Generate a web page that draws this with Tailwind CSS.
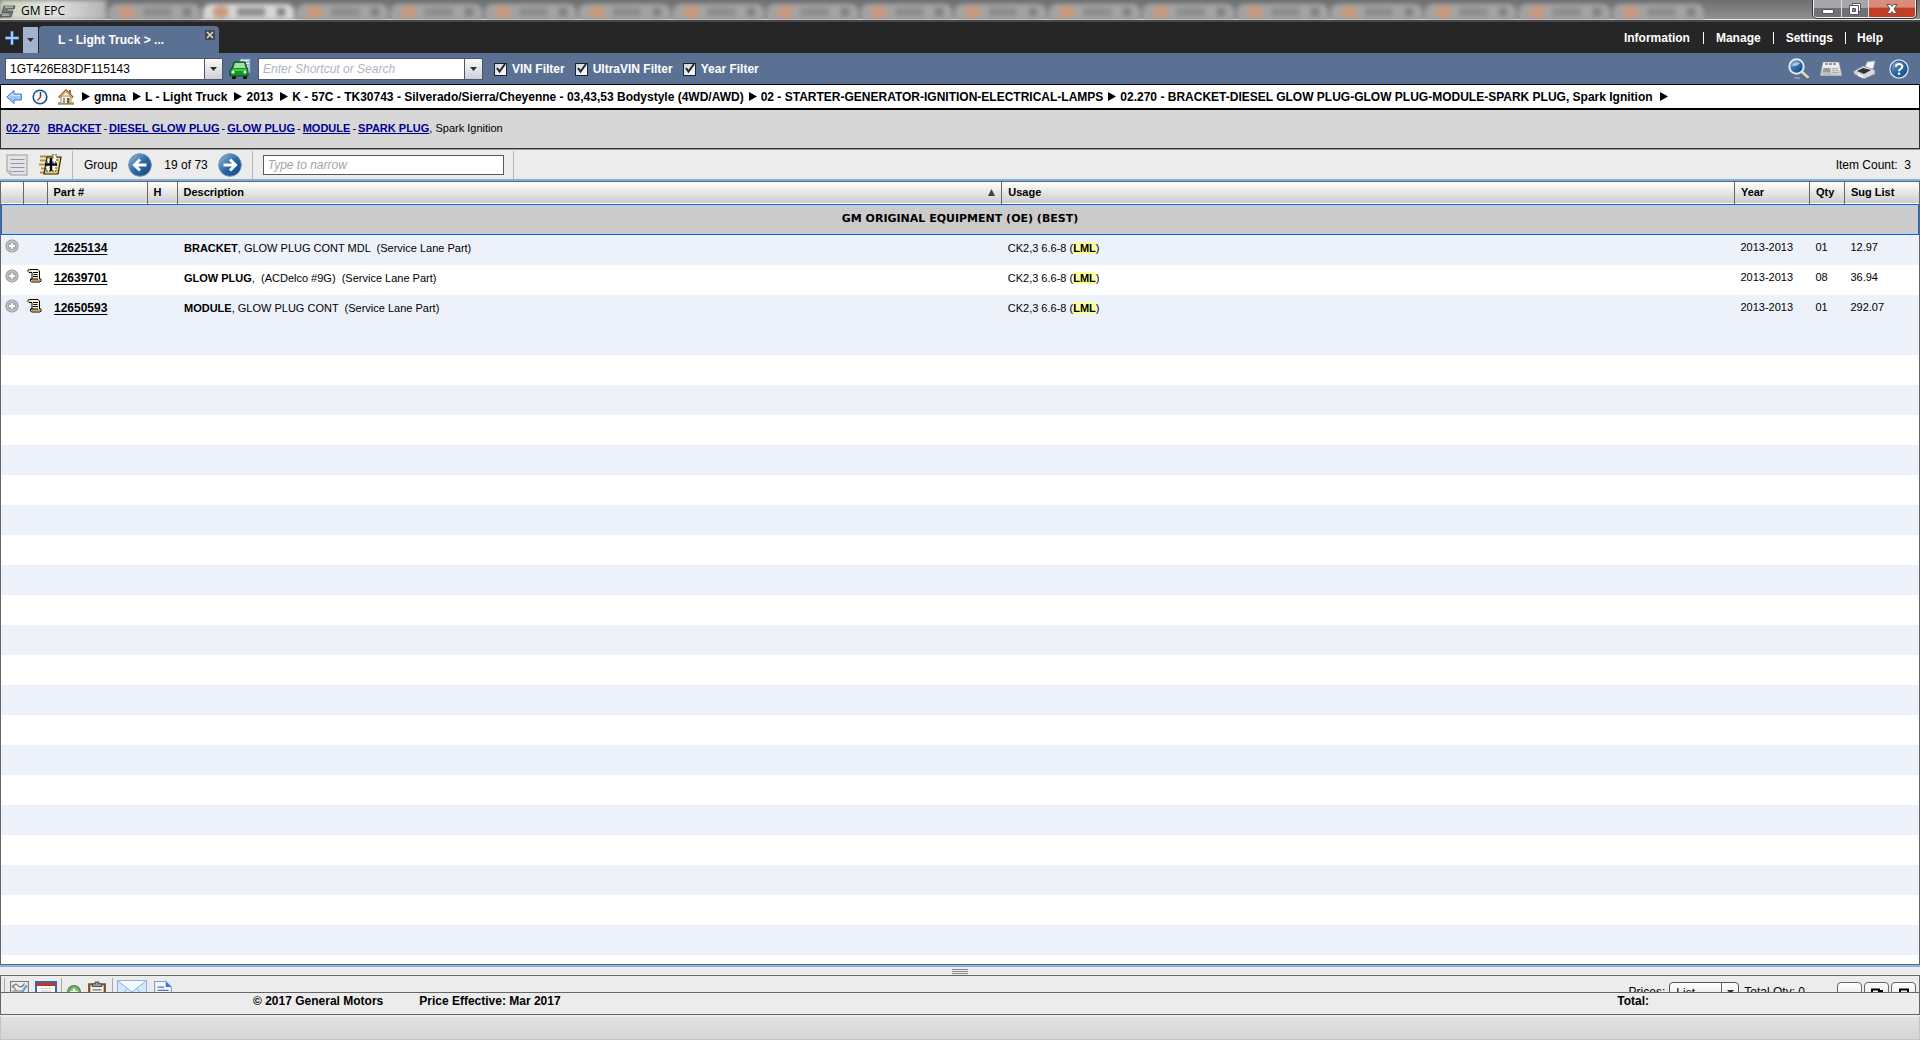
<!DOCTYPE html>
<html lang="en">
<head>
<meta charset="utf-8">
<title>GM EPC</title>
<script src="https://cdn.jsdelivr.net/npm/@tailwindcss/browser@4"></script>
</head>
<body class="flex h-screen flex-col overflow-hidden bg-[#ececec] font-['Liberation_Sans',Arial,sans-serif] text-xs text-black">

<svg class="absolute h-0 w-0" aria-hidden="true">
  <defs>
    <linearGradient id="glass" x1="0" y1="0" x2="1" y2="1"><stop offset="0" stop-color="#9cc0de"/><stop offset=".5" stop-color="#2e69a4"/><stop offset="1" stop-color="#10447f"/></linearGradient>
    <linearGradient id="steel" x1="0" y1="0" x2="0" y2="1"><stop offset="0" stop-color="#ffffff"/><stop offset="1" stop-color="#c4c7cc"/></linearGradient>
    <symbol id="crumb" viewBox="0 0 9 11"><path d="M1 1 9 5.500 1 10z" fill="#000"/></symbol>
    <symbol id="plus-disc" viewBox="0 0 15 15"><circle cx="7.500" cy="7.500" r="7" fill="#8f8f8f"/><circle cx="7.500" cy="7.500" r="5.500" fill="#adadad" stroke="#d6d6d6"/><path d="M7.500 4.500v6M4.500 7.500h6" stroke="#fff" stroke-width="2"/></symbol>
    <symbol id="scroll" viewBox="0 0 15 15"><path d="M2.500 1.500H11l1.500 1.500v8H14v2l-1 1H4.500l-1-1v-2H5V4.500H2L1 3.500V2z" fill="#fff3dc" stroke="#000"/><path d="M5 11.500h8.500v1.500H4.500z" fill="#d39a3c"/><path d="M1.500 2.500h3v1.500h-3z" fill="#e8cf9a"/><path d="M6 4.500h5M6.500 6.500h4M6 8.500h5M4 11h7" stroke="#000"/></symbol>
    <symbol id="chevron" viewBox="0 0 7 4"><path d="M0 0h7L3.500 4z" fill="#2c2f36"/></symbol>
  </defs>
</svg>

<!-- Window title bar -->
<div class="relative flex h-[22px] shrink-0 overflow-hidden border-b-2 border-[#45454a] bg-linear-to-b from-[#6d6f71] to-[#919191] shadow-[inset_0_-1px_0_#e8e8e8]">
  <div id="ghost-tabs" class="flex min-w-0 flex-1 blur-[2px]" aria-hidden="true">
    <span class="w-[106px] shrink-0 bg-linear-to-r from-[#cbd5b9] via-[#e4e4e4] to-[#b2b2b2]"></span>
  </div>
  <div class="absolute top-0 left-0 flex items-center gap-[5px] pt-px">
    <svg class="h-5 w-4" viewBox="0 0 16 20"><path d="M4 5h11l-1 3H7l-.500 2H13l-2 6H0l1-3h8l.500-1.500H2z" fill="#77777a" stroke="#48484a" stroke-width=".8"/><path d="M5 6h8M2 14h7" stroke="#ddd"/></svg>
    <span class="font-['Open_Sans',sans-serif] text-xs">GM EPC</span>
  </div>
  <div class="absolute top-0 right-1 flex h-[18px] overflow-hidden rounded-b border border-t-0 border-[#f0f0f0] outline outline-[#333]">
    <button aria-label="Minimize" class="flex w-7 items-center justify-center border-r border-[#ddd] bg-linear-to-b from-[#a6a6a8] from-50% to-[#707075] to-50%"><svg class="h-4 w-4" viewBox="0 0 16 16"><path d="M2.500 8.500h11v4h-11z" fill="#fff" stroke="#55555f"/></svg></button>
    <button aria-label="Restore" class="flex w-[27px] items-center justify-center border-r border-[#ddd] bg-linear-to-b from-[#a6a6a8] from-50% to-[#707075] to-50%"><svg class="h-4 w-4" viewBox="0 0 16 16"><path d="M5.500 2.500h8v8h-8z" fill="#fff" stroke="#55555f"/><path d="M2.500 4.500h9v9h-9z" fill="#fff" stroke="#55555f"/><path d="M5.500 7.500h3v3h-3z" fill="#88888c" stroke="#55555f"/></svg></button>
    <button aria-label="Close" class="flex w-[46px] items-center justify-center bg-linear-to-b from-[#d98c7c] from-40% to-[#c23f25] to-50%"><svg class="h-4 w-4" viewBox="0 0 16 16"><path d="M3 3.500h3.500L8 5.500l1.500-2H13L10 8l3 4.500H9.500L8 10.500l-1.500 2H3L6 8z" fill="#fff" stroke="#54545e"/></svg></button>
  </div>
</div>

<!-- Tabs and main menu -->
<div class="flex h-[31px] shrink-0 bg-[#262626]">
  <button aria-label="New tab" class="flex w-[23px] items-center justify-center"><svg class="h-3.5 w-3.5" viewBox="0 0 14 14"><path d="M7 0v14M0 7h14" stroke="#2f5c96" stroke-width="4"/><path d="M7 .5v13M.5 7h13" stroke="#a9cdf3" stroke-width="2"/></svg></button>
  <button aria-label="Tab list" class="mt-[5px] flex w-[15px] items-center justify-center bg-[#a5b2cb]"><svg class="h-1 w-[7px]"><use href="#chevron"/></svg></button>
  <div class="mt-1 ml-px flex w-[180px] justify-between rounded-t bg-[#5b7193] pr-1 pl-[19px]">
    <a href="#" class="pt-[6px] font-bold text-white">L - Light Truck &gt; ...</a>
    <button aria-label="Close tab" class="mt-1 flex h-[10px] w-[10px] items-center justify-center bg-[#484848]"><svg class="h-2 w-2" viewBox="0 0 8 8"><path d="m1 1 6 6M7 1 1 7" stroke="#ddd" stroke-width="1.500"/></svg></button>
  </div>
  <nav class="ml-auto flex items-center pr-[37px] font-bold text-white">
    <a href="#" class="border-r border-white pr-[13px] leading-3">Information</a>
    <a href="#" class="border-r border-white px-[12px] leading-3">Manage</a>
    <a href="#" class="border-r border-white px-[12px] leading-3">Settings</a>
    <a href="#" class="pl-[11px] leading-3">Help</a>
  </nav>
</div>

<!-- Search and filters -->
<div class="flex h-[31px] shrink-0 items-center bg-[#5b7193] px-[5px] pt-px">
  <div class="flex h-[22px] w-[218px] border border-[#4c5666]">
    <input aria-label="VIN" value="1GT426E83DF115143" class="min-w-0 flex-1 bg-white px-1 text-xs outline-none">
    <button aria-label="VIN history" class="flex w-[18px] items-center justify-center border-l border-[#4c5666] bg-linear-to-b from-[#fafafa] to-[#cdd0d6]"><svg class="h-1 w-[7px]"><use href="#chevron"/></svg></button>
  </div>
  <button aria-label="Vehicle information" class="ml-1.5"><svg class="h-[22px] w-[23px]" viewBox="0 0 23 22">
    <path d="M11 1h10v14H11z" fill="#e5ebf7" stroke="#7187b8"/><path d="M12 4h8M12 7h8M16 10h4" stroke="#6b80b2"/>
    <path d="M3 16h4v5H3zM14 16h4v5h-4z" fill="#151515"/>
    <path d="M5 4h11l2 6 1 2v6H1v-6l2-2z" fill="#159528" stroke="#0b4f13"/><path d="M6 5h9l1.500 5h-12z" fill="#9fe3a2"/><path d="M4 11h13v2H4z" fill="#4cc454"/><circle cx="4" cy="14" r="1.600" fill="#fff"/><circle cx="16" cy="14" r="1.600" fill="#fff"/></svg></button>
  <div class="ml-[6px] flex h-[22px] w-[225px] border border-[#4c5666]">
    <input aria-label="Shortcut or search" placeholder="Enter Shortcut or Search" class="min-w-0 flex-1 bg-white px-1 text-xs italic outline-none placeholder:text-[#b0b3b8]">
    <button aria-label="Search history" class="flex w-[18px] items-center justify-center border-l border-[#4c5666] bg-linear-to-b from-[#fafafa] to-[#cdd0d6]"><svg class="h-1 w-[7px]"><use href="#chevron"/></svg></button>
  </div>
  <div class="ml-[11px] flex gap-2.5 text-xs font-bold text-white">
    <label class="flex items-center gap-[5px]"><span class="relative flex"><input type="checkbox" checked class="h-[13px] w-[13px] appearance-none border border-[#1c2330] bg-linear-to-br from-[#cfd3da] to-white"><svg class="pointer-events-none absolute -top-px left-0.5 h-3 w-2.5" viewBox="0 0 10 12"><path d="m1 6 2.500 3.500L9 2" fill="none" stroke="#20232a" stroke-width="2"/></svg></span>VIN Filter</label>
    <label class="flex items-center gap-[5px]"><span class="relative flex"><input type="checkbox" checked class="h-[13px] w-[13px] appearance-none border border-[#1c2330] bg-linear-to-br from-[#cfd3da] to-white"><svg class="pointer-events-none absolute -top-px left-0.5 h-3 w-2.5" viewBox="0 0 10 12"><path d="m1 6 2.500 3.500L9 2" fill="none" stroke="#20232a" stroke-width="2"/></svg></span>UltraVIN Filter</label>
    <label class="flex items-center gap-[5px]"><span class="relative flex"><input type="checkbox" checked class="h-[13px] w-[13px] appearance-none border border-[#1c2330] bg-linear-to-br from-[#cfd3da] to-white"><svg class="pointer-events-none absolute -top-px left-0.5 h-3 w-2.5" viewBox="0 0 10 12"><path d="m1 6 2.500 3.500L9 2" fill="none" stroke="#20232a" stroke-width="2"/></svg></span>Year Filter</label>
  </div>
  <div class="ml-auto flex items-center gap-[11px] pr-1.5">
    <button aria-label="Find"><svg class="h-[22px] w-[22px]" viewBox="0 0 22 22"><path d="m14 13 7 6.500" stroke="#5b5f66" stroke-width="4.500" stroke-linecap="round"/><path d="m14 13 6.500 6" stroke="#d7d7d7" stroke-width="3" stroke-linecap="round"/><circle cx="9.500" cy="8.500" r="7.200" fill="url(#glass)" stroke="#e3e6ea" stroke-width="2"/><path d="M5 8a5 4 0 0 1 8-3c-2 3-5 3-8 3" fill="#c5d9ee" opacity=".8"/><path d="M7 20h6" stroke="#a9b8d2"/></svg></button>
    <button aria-label="News"><svg class="h-4 w-[22px]" viewBox="0 0 22 16"><path d="M3 1h16l3 13v1H0v-1z" fill="url(#steel)" stroke="#777b80" stroke-width=".6"/><path d="M5 3h12" stroke="#777" stroke-width="1.500" stroke-dasharray="3 1"/><path d="M3.500 7h7l-.3 4.500H2.500z" fill="#9a9a9a"/><path d="M12 7.500h6M12 9.500h6.500M12 11.500h7M3 13h8" stroke="#a5a5a5" stroke-width=".8"/></svg></button>
    <button aria-label="Print"><svg class="h-[19px] w-[23px]" viewBox="0 0 23 19"><path d="m14 2 8-1-2 8-9 1z" fill="#f3f7fa" stroke="#a8b0b8" stroke-width=".7"/><path d="M1 11 10 6l12 4v4L11 19 1 14z" fill="#d6d8da" stroke="#83868a" stroke-width=".7"/><path d="m4 11 6-3 8 2-7 4z" fill="#303338"/><path d="m5 14 5 2v2l-5-2z" fill="#fff"/></svg></button>
    <button aria-label="Help" class="ml-0.5"><svg class="h-5 w-5" viewBox="0 0 20 20"><circle cx="10" cy="10" r="9" fill="url(#glass)" stroke="#dfe7f0" stroke-width="1.500"/><circle cx="10" cy="10" r="8" fill="none" stroke="#2a5c96"/><path d="M7 7.800C7 4 13.500 4.200 13.300 7.800 13.200 10 10 9.700 10 12.200" fill="none" stroke="#fff" stroke-width="2.200"/><path d="M8.900 13.600h2.300v2.200H8.900z" fill="#fff"/></svg></button>
  </div>
</div>

<!-- Breadcrumb -->
<div class="flex h-[26px] shrink-0 items-center border border-b-2 border-black bg-white px-[5px] font-bold whitespace-nowrap">
  <button aria-label="Back"><svg class="h-4 w-4" viewBox="0 0 16 16"><path d="M.8 8 8 1.500V5h7.300v6H8v3.500z" fill="#9cc6f8" stroke="#4577d4"/><path d="M3 8 7 4.500V6.500h7" fill="none" stroke="#dcebff"/></svg></button>
  <button aria-label="History" class="ml-2.5"><svg class="h-4 w-4" viewBox="0 0 16 16"><circle cx="8" cy="8" r="6.800" fill="#fff" stroke="#1d5283" stroke-width="1.600"/><circle cx="8" cy="8" r="5" fill="none" stroke="#9cc" stroke-dasharray="1 3"/><path d="M8.500 3v5l-3 3.500" fill="none" stroke="#c03030" stroke-width="1.300"/><path d="M8.500 3v5" stroke="#224d86" stroke-width="1.300"/></svg></button>
  <button aria-label="Home" class="ml-2.5"><svg class="h-4 w-4" viewBox="0 0 16 16"><path d="M0 14.500h16" stroke="#7ca64a" stroke-width="2.500"/><path d="M3 7h10v7.500H3z" fill="#f7efe0" stroke="#a78a68"/><path d="M11 1h2v4h-2z" fill="#b45d3c"/><path d="m1 8.500 7-7 7 7" fill="none" stroke="#9a622f" stroke-width="2.200"/><path d="m2 8 6-6 6 6" fill="none" stroke="#e3b56d"/><path d="M5 9h2v5H5z" fill="#7f9ab8"/><path d="M9 9h2.500v5.500H9z" fill="#8a5a35"/></svg></button>
  <nav class="flex items-center gap-1 pl-[7px]" aria-label="Breadcrumb">
    <svg class="h-[11px] w-[9px]"><use href="#crumb"/></svg><a href="#">gmna</a>
    <svg class="ml-0.5 h-[11px] w-[9px]"><use href="#crumb"/></svg><a href="#">L - Light Truck</a>
    <svg class="ml-0.5 h-[11px] w-[9px]"><use href="#crumb"/></svg><a href="#">2013</a>
    <svg class="ml-0.5 h-[11px] w-[9px]"><use href="#crumb"/></svg><a href="#">K - 57C - TK30743 - Silverado/Sierra/Cheyenne - 03,43,53 Bodystyle (4WD/AWD)</a>
    <svg class="h-[11px] w-[9px]"><use href="#crumb"/></svg><a href="#">02 - STARTER-GENERATOR-IGNITION-ELECTRICAL-LAMPS</a>
    <svg class="h-[11px] w-[9px]"><use href="#crumb"/></svg><a href="#">02.270 - BRACKET-DIESEL GLOW PLUG-GLOW PLUG-MODULE-SPARK PLUG, Spark Ignition</a>
    <svg class="ml-0.5 h-[11px] w-[9px]"><use href="#crumb"/></svg>
  </nav>
</div>

<!-- Group caption -->
<div class="flex h-[39px] shrink-0 items-center gap-0.5 border-x border-b border-[#333] bg-[#d7d7d7] px-[5px] pb-0.5 text-[11px]">
  <a href="#" class="mr-1.5 font-bold text-[#00008f] underline">02.270</a>
  <a href="#" class="font-bold text-[#00008f] underline">BRACKET</a><span>-</span>
  <a href="#" class="font-bold text-[#00008f] underline">DIESEL GLOW PLUG</a><span>-</span>
  <a href="#" class="font-bold text-[#00008f] underline">GLOW PLUG</a><span>-</span>
  <a href="#" class="font-bold text-[#00008f] underline">MODULE</a><span>-</span>
  <span><a href="#" class="font-bold text-[#00008f] underline">SPARK PLUG</a>, Spark Ignition</span>
</div>

<!-- Group toolbar -->
<div class="flex h-8 shrink-0 items-center border-t border-b-2 border-t-[#999] border-b-[#7fb0e0] bg-[#ececec] px-1.5">
  <button aria-label="List view"><svg class="h-[22px] w-[22px]" viewBox="0 0 22 22"><path d="M1 1h20v20H5l-4-4z" fill="#e4e4e4" stroke="#b5b5b5" stroke-width="1.500"/><path d="M4.500 5.500h14M4.500 9.500h14M4.500 13.500h14M6.500 17.500h12" stroke="#8b97b5"/><path d="M1 17h4v4" fill="#ccc" stroke="#aaa"/></svg></button>
  <button aria-label="Add callouts" class="ml-[11px]"><svg class="h-[22px] w-[23px]" viewBox="0 0 23 22"><path d="M1 2.500h14M1 6.500h9M0 10.500h9M2 14.500h7M1 18.500h6" stroke="#b8922c" stroke-width="2"/><path d="m8 3 14 0-3 17H5z" fill="#f4d548" stroke="#222" stroke-width="1.200"/><path d="M9 5h10l-2 12H7z" fill="#fff"/><path d="M13 1h5v7M7 8h10v9H7z" fill="#fff" stroke="#222a66" stroke-dasharray="2 1"/><path d="M12 4v13M6 10.500h12" stroke="#000" stroke-width="2.500"/></svg></button>
  <span class="ml-[10px] h-7 w-px bg-[#b8b8b8]"></span>
  <span class="ml-[11px]">Group</span>
  <button aria-label="Previous group" class="ml-[11px]"><svg class="h-6 w-6" viewBox="0 0 24 24"><circle cx="12" cy="12" r="11.300" fill="url(#glass)" stroke="#6b8fb2"/><path d="M18.500 12H7M12 6.500 6.500 12l5.500 5.500" fill="none" stroke="#fff" stroke-width="3"/></svg></button>
  <span class="ml-3">19 of 73</span>
  <button aria-label="Next group" class="ml-[10px]"><svg class="h-6 w-6" viewBox="0 0 24 24"><circle cx="12" cy="12" r="11.300" fill="url(#glass)" stroke="#6b8fb2"/><path d="M5.500 12H17M12 6.500 17.500 12 12 17.500" fill="none" stroke="#fff" stroke-width="3"/></svg></button>
  <span class="ml-2.5 h-7 w-px bg-[#b8b8b8]"></span>
  <input aria-label="Type to narrow" placeholder="Type to narrow" class="ml-2.5 h-5 w-[241px] border border-[#5a5a5a] bg-white px-1 text-xs italic outline-none placeholder:text-[#a4a4a4]">
  <span class="ml-[9px] h-7 w-px bg-[#b8b8b8]"></span>
  <span class="mr-[3px] ml-auto whitespace-pre">Item Count:  3</span>
</div>

<!-- Parts list -->
<main class="flex min-h-0 flex-1 flex-col overflow-hidden border border-[#666] bg-white">
  <table class="w-full table-fixed border-collapse text-left text-[11px]">
    <colgroup><col class="w-[22px]"><col class="w-6"><col class="w-[100px]"><col class="w-[30px]"><col class="w-[43%]"><col class="w-[38.2%]"><col class="w-[75px]"><col class="w-[35px]"><col></colgroup>
    <thead>
      <tr class="h-[22px] border-b border-[#666] bg-linear-to-b from-white to-[#cdcdcd]">
        <th class="border-r border-[#666]"></th><th class="border-r border-[#666]"></th>
        <th class="border-r border-[#666] pl-1.5">Part #</th>
        <th class="border-r border-[#666] pl-1.5">H</th>
        <th class="border-r border-[#666] px-1.5"><div class="flex items-center justify-between">Description<svg class="h-[7px] w-[7px]" viewBox="0 0 7 7"><path d="M3.500 0 7 7H0z" fill="#444"/></svg></div></th>
        <th class="border-r border-[#666] pl-1.5">Usage</th>
        <th class="border-r border-[#666] pl-1.5">Year</th>
        <th class="border-r border-[#666] pl-1.5">Qty</th>
        <th class="pl-1.5">Sug List</th>
      </tr>
    </thead>
    <tbody class="align-top">
      <tr class="h-[31px] bg-[#cbcbcb] outline outline-[#0a66e6] -outline-offset-1"><th colspan="9" class="text-center align-middle font-['DejaVu_Sans',Verdana,sans-serif] text-[11px]">GM ORIGINAL EQUIPMENT (OE) (BEST)</th></tr>
      <tr class="h-[30px] bg-[#edf2fa]">
        <td class="pt-1 pl-1"><button aria-label="Expand 12625134" class="block"><svg class="h-3.5 w-3.5"><use href="#plus-disc"/></svg></button></td><td></td>
        <td class="pt-[5px] pl-[7px] text-xs font-bold"><a href="#" class="underline underline-offset-2">12625134</a></td><td></td>
        <td class="pt-1.5 pl-[7px] whitespace-pre"><b>BRACKET</b>, GLOW PLUG CONT MDL  (Service Lane Part)</td>
        <td class="pt-1.5 pl-1.5">CK2,3 6.6-8 (<mark class="bg-[#ffff99] font-bold">LML</mark>)</td>
        <td class="pt-[5px] pl-1.5">2013-2013</td><td class="pt-[5px] pl-1.5">01</td><td class="pt-[5px] pl-1.5">12.97</td>
      </tr>
      <tr class="h-[30px] bg-white">
        <td class="pt-1 pl-1"><button aria-label="Expand 12639701" class="block"><svg class="h-3.5 w-3.5"><use href="#plus-disc"/></svg></button></td><td class="pt-[3px] pl-1"><svg class="h-[15px] w-[15px]"><use href="#scroll"/></svg></td>
        <td class="pt-[5px] pl-[7px] text-xs font-bold"><a href="#" class="underline underline-offset-2">12639701</a></td><td></td>
        <td class="pt-1.5 pl-[7px] whitespace-pre"><b>GLOW PLUG</b>,  (ACDelco #9G)  (Service Lane Part)</td>
        <td class="pt-1.5 pl-1.5">CK2,3 6.6-8 (<mark class="bg-[#ffff99] font-bold">LML</mark>)</td>
        <td class="pt-[5px] pl-1.5">2013-2013</td><td class="pt-[5px] pl-1.5">08</td><td class="pt-[5px] pl-1.5">36.94</td>
      </tr>
      <tr class="h-[30px] bg-[#edf2fa]">
        <td class="pt-1 pl-1"><button aria-label="Expand 12650593" class="block"><svg class="h-3.5 w-3.5"><use href="#plus-disc"/></svg></button></td><td class="pt-[3px] pl-1"><svg class="h-[15px] w-[15px]"><use href="#scroll"/></svg></td>
        <td class="pt-[5px] pl-[7px] text-xs font-bold"><a href="#" class="underline underline-offset-2">12650593</a></td><td></td>
        <td class="pt-1.5 pl-[7px] whitespace-pre"><b>MODULE</b>, GLOW PLUG CONT  (Service Lane Part)</td>
        <td class="pt-1.5 pl-1.5">CK2,3 6.6-8 (<mark class="bg-[#ffff99] font-bold">LML</mark>)</td>
        <td class="pt-[5px] pl-1.5">2013-2013</td><td class="pt-[5px] pl-1.5">01</td><td class="pt-[5px] pl-1.5">292.07</td>
      </tr>
    </tbody>
  </table>
  <div class="h-[30px] shrink-0 bg-[#edf2fa]"></div>
  <div class="flex-1 bg-[repeating-linear-gradient(to_bottom,#ffffff_0_30px,#edf2fa_30px_60px)]"></div>
</main>

<!-- Splitter -->
<div class="flex h-2.5 shrink-0 items-center justify-center border-t-2 border-[#7fb5ee]">
  <span class="h-[5px] w-4 border-y border-[#8a8a8a] bg-[linear-gradient(#ececec_1px,#8a8a8a_1px_2px,#ececec_2px)]"></span>
</div>

<!-- Pick list, collapsed to its top edge -->
<section class="flex h-[17px] shrink-0 items-start overflow-hidden border border-b-0 border-[#666] bg-[#ececec]">
  <div class="flex items-start pl-[3px]">
    <span class="mt-0.5 h-6 w-px bg-[#aaa]"></span>
    <button aria-label="Pick list" class="mt-[5px] ml-[5px]"><svg class="h-5 w-5" viewBox="0 0 18 18"><path d="M.5 .5h16v15H.5z" fill="#eee" stroke="#777"/><path d="M2 6c3-5 4-3 5-2s4 3 6-2M2 9h10M2 12h8M2 4l4 5" fill="none" stroke="#777"/><path d="m9 13 6-9" stroke="#6f9ac6" stroke-width="2"/></svg></button>
    <button aria-label="Details" class="mt-[5px] ml-[5px]"><svg class="h-5 w-[22px]" viewBox="0 0 22 20"><path d="M1 1h20v20H1z" fill="#fff" stroke="#3a69a8" stroke-width="2"/><path d="M2 3.500h18" stroke="#cf2f22" stroke-width="3"/><path d="M6 7.500h10M6 10h10" stroke="#c8c8c8"/></svg></button>
    <span class="mt-0.5 ml-1 h-6 w-px bg-[#aaa]"></span>
    <button aria-label="Add part" class="mt-[9px] ml-[5px]"><svg class="h-3.5 w-3.5" viewBox="0 0 12 12"><circle cx="6" cy="6" r="5.500" fill="#74b965" stroke="#4b8d43"/><path d="M6 3v6M3 6h6" stroke="#fff" stroke-width="2"/></svg></button>
    <button aria-label="Paste" class="mt-[5px] ml-[7px]"><svg class="h-5 w-[18px]" viewBox="0 0 16 18"><path d="M1 3h14v15H1z" fill="#f0efe9" stroke="#7d4e28" stroke-width="2"/><path d="M4 5V2.500h2.500V1h3v1.500H12V5z" fill="#999" stroke="#555"/><path d="M4 8h8M4 10.500h8" stroke="#777"/></svg></button>
    <span class="mt-0.5 ml-1.5 h-6 w-px bg-[#aaa]"></span>
    <button aria-label="Mail" class="mt-1 ml-1"><svg class="h-5 w-[30px]" viewBox="0 0 30 20"><path d="M.5.5h29v19H.5z" fill="#d3e8fb" stroke="#8ab4e4"/><path d="m1 1 14 11L29 1M1 19l9-10M29 19l-9-10" fill="#f4faff" stroke="#8ab4e4"/></svg></button>
    <button aria-label="Document" class="mt-[5px] ml-[7px]"><svg class="h-5 w-[18px]" viewBox="0 0 16 18"><path d="M.5.500h10l5 5V18H.5z" fill="#f4f8ff" stroke="#7d9cd8"/><path d="M10.500.5v5h5z" fill="#3f70cf"/><path d="M3 5.500h6M3 8.500h10" stroke="#5374b8" stroke-width="1.200"/></svg></button>
  </div>
  <div class="ml-auto flex items-start pt-1.5 pr-[3px]">
    <label for="prices" class="pt-0.5">Prices:</label>
    <div class="relative ml-1 w-[70px]">
      <select id="prices" class="block h-[22px] w-full appearance-none rounded-sm border border-[#555] bg-linear-to-b from-white to-[#ddd] pl-1.5 text-xs"><option>List</option></select>
      <span class="pointer-events-none absolute top-0 right-0 flex h-[22px] w-[18px] justify-center border-l border-[#666] pt-2"><svg class="h-1 w-[7px]"><use href="#chevron"/></svg></span>
    </div>
    <span class="ml-[5px] pt-0.5">Total Qty: 0</span>
    <button aria-label="Collapse" class="ml-8 h-[22px] w-[25px] rounded-sm border border-[#666] bg-linear-to-b from-white to-[#ddd]"></button>
    <button aria-label="Restore panel" class="ml-0.5 flex h-[22px] w-[25px] justify-center rounded-sm border border-[#666] bg-linear-to-b from-white to-[#ddd] pt-[5px]"><svg class="h-2.5 w-3" viewBox="0 0 12 10"><path d="M1 9V1.500h7V9M8 3h3v5" fill="none" stroke="#000" stroke-width="2"/></svg></button>
    <button aria-label="Maximize panel" class="ml-0.5 flex h-[22px] w-[25px] justify-center rounded-sm border border-[#666] bg-linear-to-b from-white to-[#ddd] pt-[5px]"><svg class="h-2.5 w-3" viewBox="0 0 12 10"><path d="M2 9V1.500h8V9z" fill="none" stroke="#000" stroke-width="2"/></svg></button>
  </div>
</section>

<!-- Footer -->
<footer class="flex h-[23px] shrink-0 items-start border border-[#666] bg-[#ececec] font-bold">
  <span class="ml-[252px]">© 2017 General Motors</span>
  <span class="ml-9">Price Effective: Mar 2017</span>
  <span class="mr-[270px] ml-auto">Total:</span>
</footer>
<div class="h-[25px] shrink-0 border border-t-2 border-[#c4c4c4] border-t-[#ececec] bg-linear-to-b from-[#e2e2e2] to-[#d6d6d6]"></div>

<script>
  // Browser tabs showing through the translucent title bar; the second one is active.
  const strip = document.getElementById('ghost-tabs');
  for (let i = 0; i < 17; i++) {
    const tab = document.createElement('span');
    tab.className = i === 1
      ? 'mt-1 ml-[3px] flex w-[91px] shrink-0 items-center gap-2 rounded-t-lg bg-[#d6d6d6] pl-2.5'
      : 'mt-1 ml-[3px] flex w-[91px] shrink-0 items-center gap-2 rounded-t-lg bg-[#a3a3a3] pl-2.5';
    tab.innerHTML = '<i class="h-3 w-4 rounded-full bg-[#c99a7c]"></i><i class="h-2 w-7 bg-[#8d8d8d]"></i><i class="ml-1 h-2 w-2 bg-[#808080]"></i>';
    strip.append(tab);
  }
</script>
</body>
</html>
